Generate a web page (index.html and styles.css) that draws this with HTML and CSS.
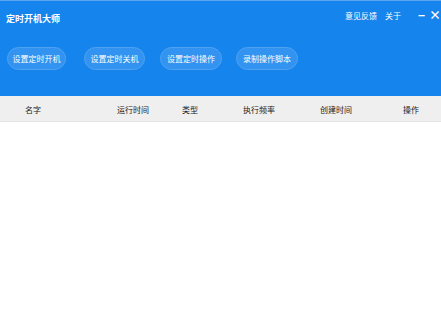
FILE: index.html
```html
<!DOCTYPE html>
<html lang="zh-CN">
<head>
<meta charset="utf-8">
<link rel="stylesheet" href="styles.css">
</head>
<body>
<div class="app">
  <header class="top">
    <div class="titlebar">
      <div class="title">定时开机大师</div>
      <div class="links">
        <span class="link">意见反馈</span>
        <span class="link">关于</span>
        <span class="win min">−</span>
        <span class="win close">×</span>
      </div>
    </div>
    <div class="toolbar">
      <button class="btn">设置定时开机</button>
      <button class="btn">设置定时关机</button>
      <button class="btn">设置定时操作</button>
      <button class="btn">录制操作脚本</button>
    </div>
  </header>
  <div class="thead">
    <span class="c c1">名字</span>
    <span class="c c2">运行时间</span>
    <span class="c c3">类型</span>
    <span class="c c4">执行频率</span>
    <span class="c c5">创建时间</span>
    <span class="c c6">操作</span>
  </div>
  <div class="tbody"></div>
</div>
</body>
</html>
```
FILE: styles.css
```css
* { box-sizing: border-box; }
html, body { margin: 0; padding: 0; }
body {
  width: 441px;
  height: 314px;
  overflow: hidden;
  background: #fff;
  font-family: "Noto Sans CJK SC", "Noto Sans", sans-serif;
}
.app { display: flex; flex-direction: column; height: 100%; }
.top {
  background: #1584ec;
  border-top: 1px solid #5aa6f2;
  height: 96px;
  display: flex;
  flex-direction: column;
}
.titlebar {
  display: flex;
  justify-content: space-between;
  align-items: center;
  height: 30px;
  padding: 0 0 0 6px;
}
.title {
  color: #fff;
  font-size: 9px;
  font-weight: bold;
  margin-top: 4px;
}
.links {
  display: flex;
  align-items: center;
  color: #fff;
  font-size: 8px;
  margin-top: -2px;
}
.link { margin-right: 8px; }
.link + .link { margin-right: 17px; }
.win { font-size: 12px; font-weight: bold; line-height: 1; }
.min { margin-right: 4px; }
.close { margin-right: 0; }
.toolbar {
  display: flex;
  padding: 16px 0 0 7px;
}
.btn {
  height: 23px;
  border-radius: 12px;
  border: 1px solid #4fa2f2;
  background: #3293f0;
  color: #fff;
  font-family: inherit;
  font-size: 8px;
  padding: 0 4px;
  width: 59px;
  white-space: nowrap;
}
.btn:nth-child(2) { margin-left: 18px; width: 61px; }
.btn:nth-child(3) { margin-left: 15px; width: 62px; }
.btn:nth-child(4) { margin-left: 14px; width: 62px; }
.thead {
  height: 26px;
  background: #efefef;
  border-bottom: 1px solid #e6e6e6;
  display: flex;
  align-items: center;
  font-size: 8px;
  color: #1a1a1a;
  padding-top: 1px;
}
.c { white-space: nowrap; }
.c1 { margin-left: 25px; }
.c2 { margin-left: 76px; }
.c3 { margin-left: 33px; }
.c4 { margin-left: 45px; }
.c5 { margin-left: 45px; }
.c6 { margin-left: 51px; }
.tbody { flex: 1; background: #fff; }
```
